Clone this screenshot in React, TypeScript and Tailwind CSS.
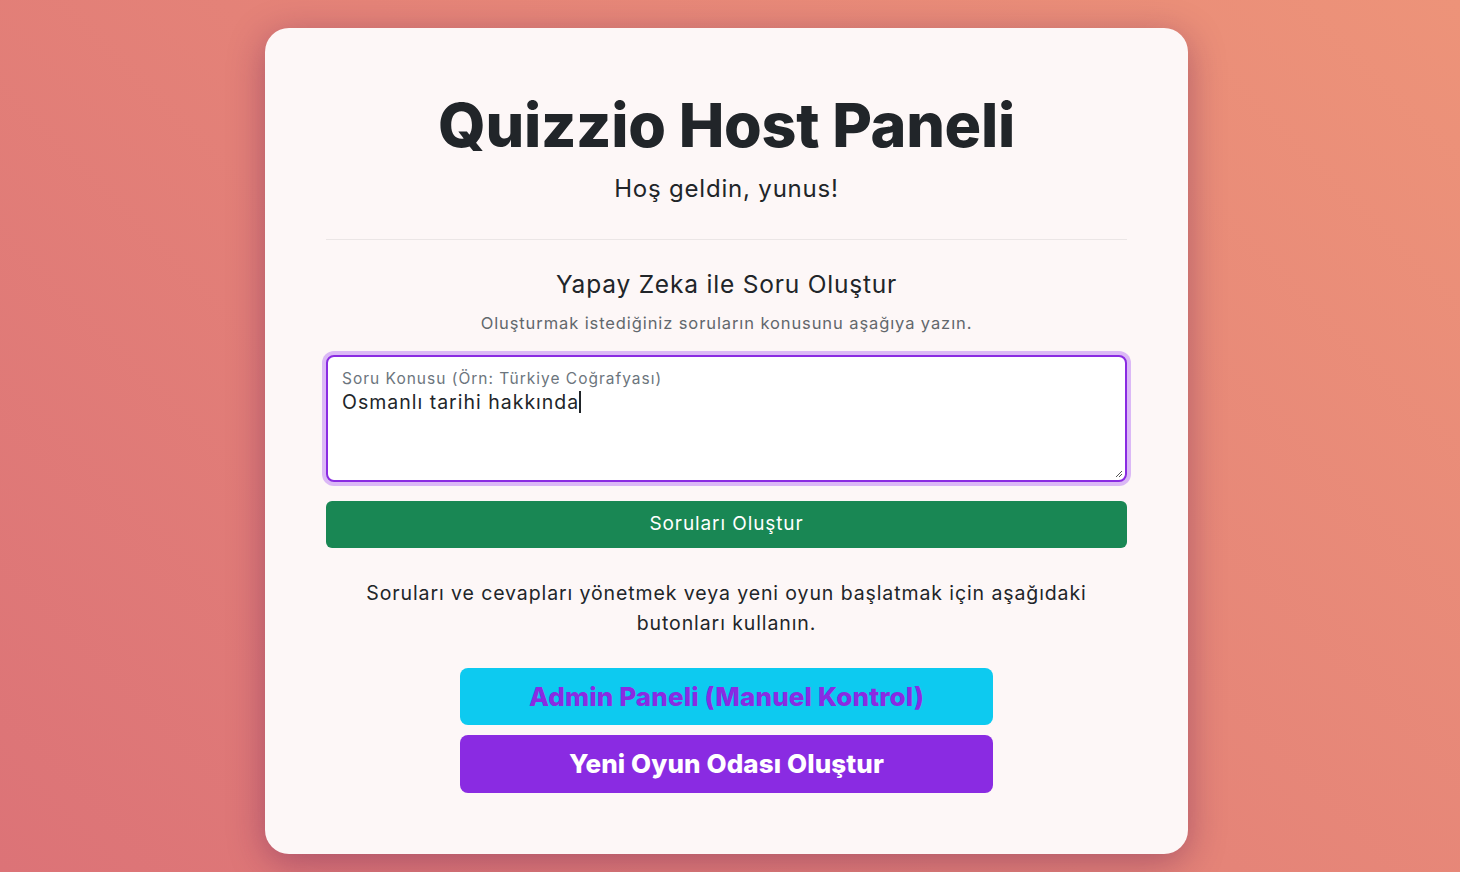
import React from "react";

export default function App() {
  return (
    <div
      className="min-h-screen w-full bg-[linear-gradient(45deg,#dc7377,#ed9379)] flex justify-center pt-[28px] pb-[18px] pr-[7px]"
      style={{ fontFamily: "Inter, 'Noto Sans', sans-serif" }}
    >
      <div className="w-[923px] rounded-[24px] bg-[#fdf7f7] shadow-[0_8px_36px_rgba(90,20,80,0.4)] px-[61px] pt-[61px] pb-[61px] flex flex-col items-center text-center">
        <h1 className="text-[61px] leading-[72px] font-extrabold text-[#212529] tracking-[-0.3px]">
          Quizzio Host Paneli
        </h1>
        <p className="mt-[10px] text-[24px] leading-[36px] text-[#212529] tracking-[0.8px]">Hoş geldin, yunus!</p>
        <div className="mt-[32px] h-px w-full bg-[#ebe6e6]" />
        <h2 className="mt-[26px] text-[24.5px] leading-[36px] text-[#212529] tracking-[0.8px]">Yapay Zeka ile Soru Oluştur</h2>
        <p className="mt-[9px] text-[16.5px] leading-[24px] text-[#62676c] tracking-[0.9px]">
          Oluşturmak istediğiniz soruların konusunu aşağıya yazın.
        </p>
        <div className="mt-[20px] w-full rounded-[8px] border-2 border-[#8a2be2] bg-white shadow-[0_0_0_4px_#dbb8f6] h-[127px] flex flex-col items-start text-left px-[14px] pt-[12px] relative">
          <span className="text-[15.5px] leading-[20px] text-[#6c757d] tracking-[1px]">Soru Konusu (Örn: Türkiye Coğrafyası)</span>
          <span className="text-[19.5px] leading-[26px] text-[#212529] tracking-[1px] flex items-center">
            Osmanlı tarihi hakkında
            <span className="inline-block w-[1.5px] h-[22px] bg-[#212529]" />
          </span>
          <svg className="absolute right-[2px] bottom-[2px]" width="9" height="9" viewBox="0 0 9 9">
            <path d="M8 2 L2 8 M8 5 L5 8" stroke="#555" strokeWidth="1" />
          </svg>
        </div>
        <button className="mt-[19px] w-full h-[47px] rounded-[6px] bg-[#198754] text-white text-[19px] tracking-[0.9px]">
          Soruları Oluştur
        </button>
        <p className="mt-[30px] text-[19.5px] leading-[30px] text-[#212529] tracking-[0.9px]">
          Soruları ve cevapları yönetmek veya yeni oyun başlatmak için aşağıdaki
          <br />
          butonları kullanın.
        </p>
        <div className="mt-[30px] w-[533px] flex flex-col gap-[10px]">
          <button className="h-[57px] rounded-[8px] bg-[#0dcaf0] text-[#8a2be2] text-[26px] font-extrabold tracking-[0.15px]">
            Admin Paneli (Manuel Kontrol)
          </button>
          <button className="h-[58px] rounded-[8px] bg-[#8a2be2] text-white text-[26px] font-extrabold tracking-[0.1px] pb-[2px]">
            Yeni Oyun Odası Oluştur
          </button>
        </div>
      </div>
    </div>
  );
}
